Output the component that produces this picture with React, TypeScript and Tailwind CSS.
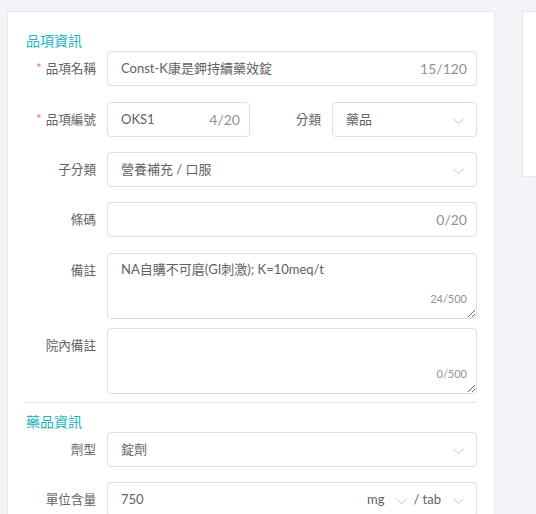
import type { ReactNode } from "react";

const font = { fontFamily: "Lato, 'Noto Sans CJK TC', sans-serif" };

const boxCls =
  "relative flex h-[35px] items-center rounded-[4px] border border-[#dcdfe6] bg-white pl-[13px] pr-[9px] text-[13px] text-[#606266]";

function Chevron() {
  return (
    <svg width="11" height="7" viewBox="0 0 11 7" className="mt-[3px] shrink-0">
      <polyline points="0.5,0.8 5.5,5.5 10.5,0.8" fill="none" stroke="#c0c4cc" strokeWidth="1" />
    </svg>
  );
}

function Label({ children, required, w = "w-[70px]" }: { children: ReactNode; required?: boolean; w?: string }) {
  return (
    <div className={`${w} h-[35px] shrink-0 pr-[11px] text-right text-[12.6px] leading-[35px] text-[#606266]`}>
      {required && <span className="mr-[4px] text-[#f56c6c]">*</span>}
      {children}
    </div>
  );
}

function SectionTitle({ children }: { children: ReactNode }) {
  return <div className="h-[21px] text-[14px] leading-[21px] text-[#26b3c6]">{children}</div>;
}

function Count({ children }: { children: ReactNode }) {
  return <span className="text-[14px] text-[#909399]">{children}</span>;
}

function TextRow({ label, value, count, required, mb }: { label: string; value: string; count: string; required?: boolean; mb: string }) {
  return (
    <div className={`flex ${mb}`}>
      <Label required={required} w="w-[81px]">{label}</Label>
      <div className={`${boxCls} flex-1`}>
        <span className="flex-1">{value}</span>
        <Count>{count}</Count>
      </div>
    </div>
  );
}

function SelectRow({ label, value, mb }: { label: string; value: string; mb: string }) {
  return (
    <div className={`flex ${mb}`}>
      <Label w="w-[81px]">{label}</Label>
      <div className={`${boxCls} flex-1 pr-[12px]`}>
        <span className="flex-1">{value}</span>
        <Chevron />
      </div>
    </div>
  );
}

function AreaRow({ label, value, count, mb }: { label: string; value: string; count: string; mb: string }) {
  return (
    <div className={`flex ${mb}`}>
      <Label w="w-[81px]">{label}</Label>
      <div className="relative flex-1">
        <textarea
          readOnly
          defaultValue={value}
          className="block h-[66px] w-full resize-y rounded-[4px] border border-[#dcdfe6] bg-white px-[13px] pt-[5px] text-[13px] leading-[21px] text-[#606266] outline-none"
          style={font}
        />
        <span className="absolute bottom-[14px] right-[10px] text-[11px] leading-[12px] text-[#909399]">{count}</span>
      </div>
    </div>
  );
}

export default function App() {
  return (
    <div className="h-[514px] w-[536px] overflow-hidden bg-[#f3f4f8]" style={font}>
      <div className="flex gap-[27px] pl-[7px] pt-[11px]">
        <div className="w-[488px] shrink-0 rounded-[2px] border border-[#e4e7ed] bg-white pb-[20px] pl-[18px] pr-[17px] pt-[18px]">
          <SectionTitle>品項資訊</SectionTitle>

          <TextRow label="品項名稱" value="Const-K康是鉀持續藥效錠" count="15/120" required mb="mb-[16px]" />

          <div className="mb-[15px] flex">
            <Label required w="w-[81px]">品項編號</Label>
            <div className={`${boxCls} w-[143px]`}>
              <span className="flex-1">OKS1</span>
              <Count>4/20</Count>
            </div>
            <Label w="w-[82px]">分類</Label>
            <div className={`${boxCls} flex-1 pr-[12px]`}>
              <span className="flex-1">藥品</span>
              <Chevron />
            </div>
          </div>

          <SelectRow label="子分類" value="營養補充 / 口服" mb="mb-[15px]" />
          <TextRow label="條碼" value="" count="0/20" mb="mb-[16px]" />
          <AreaRow label="備註" value="NA自購不可磨(GI刺激); K=10meq/t" count="24/500" mb="mb-[9px]" />
          <AreaRow label="院內備註" value="" count="0/500" mb="mb-[8px]" />

          <div className="h-px bg-[#e4e7ed]" />
          <div className="mt-[8px]">
            <SectionTitle>藥品資訊</SectionTitle>
          </div>

          <SelectRow label="劑型" value="錠劑" mb="mb-[15px]" />

          <div className="flex">
            <Label w="w-[81px]">單位含量</Label>
            <div className={`${boxCls} flex-1 pr-[12px]`}>
              <span className="flex-1">750</span>
              <span className="mr-[12px]">mg</span>
              <Chevron />
              <span className="ml-[6px] mr-[12px]">/ tab</span>
              <Chevron />
            </div>
          </div>
        </div>

        <div className="h-[166px] w-[200px] shrink-0 border border-[#e4e7ed] bg-white" />
      </div>
    </div>
  );
}
